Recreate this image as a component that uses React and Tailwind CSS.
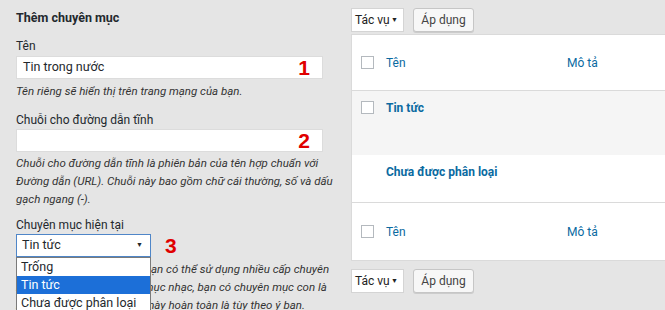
import React from 'react';

const font = { fontFamily: 'Roboto, "Noto Sans", sans-serif' };

function Checkbox() {
  return <span className="inline-block w-[13px] h-[13px] border border-[#b4b9be] bg-white shrink-0" />;
}

function BulkActions() {
  return (
    <div className="flex items-center gap-[9px] h-[24px]">
      <div className="h-full w-[53px] bg-white border border-[#d4d4d4] flex items-center justify-between pl-[3px] pr-[5px] text-[12px] text-[#222] whitespace-nowrap">
        <span>Tác vụ</span>
        <span className="text-[7px]">▼</span>
      </div>
      <button className="h-full w-[61px] bg-[#f7f7f7] border border-[#c6c6c6] rounded-[3px] shadow-[0_1px_0_#ccc] text-[12px] text-[#444] whitespace-nowrap">
        Áp dụng
      </button>
    </div>
  );
}

function Marker({ children }) {
  return (
    <span className="text-[#e00000] font-bold text-[21px] leading-none" style={{ fontFamily: '"Liberation Sans", Arial, sans-serif' }}>
      {children}
    </span>
  );
}

export default function App() {
  return (
    <div className="w-[665px] h-[310px] overflow-hidden bg-[#e5e5e5] flex text-[#23282d]" style={font}>
      {/* left: add category form */}
      <div className="w-[307px] ml-[16px] shrink-0 pt-[9px]">
        <h2 className="text-[12.5px] font-bold leading-[18px]">Thêm chuyên mục</h2>

        <label className="block mt-[10px] text-[12px] leading-[18px]">Tên</label>
        <div className="mt-[1px] h-[23px] bg-white border border-[#dcdcdc] flex items-center justify-between pl-[6px] pr-[12px]">
          <span className="text-[12.5px]">Tin trong nước</span>
          <Marker>1</Marker>
        </div>
        <p className="mt-[3px] text-[11.5px] italic leading-[18px] text-[#333]">Tên riêng sẽ hiển thị trên trang mạng của bạn.</p>

        <label className="block mt-[11px] text-[12px] leading-[18px]">Chuỗi cho đường dẫn tĩnh</label>
        <div className="h-[23px] bg-white border border-[#dcdcdc] flex items-center justify-end pr-[12px]">
          <Marker>2</Marker>
        </div>
        <p className="mt-[2px] text-[11.5px] italic leading-[18px] text-[#333] whitespace-nowrap">
          Chuỗi cho đường dẫn tĩnh là phiên bản của tên hợp chuẩn với<br />
          Đường dẫn (URL). Chuỗi này bao gồm chữ cái thường, số và dấu<br />
          gạch ngang (-).
        </p>

        <label className="block mt-[8px] text-[12px] leading-[18px]">Chuyên mục hiện tại</label>
        <div className="relative">
          <div className="flex items-center gap-[14px]">
            <div className="w-[135px] h-[23px] bg-white border border-[#4f86c8] flex items-center justify-between pl-[5px] pr-[7px]">
              <span className="text-[12.5px]">Tin tức</span>
              <span className="text-[7px]">▼</span>
            </div>
            <Marker>3</Marker>
          </div>
          <p className="mt-[3px] text-[11.5px] italic leading-[18px] text-[#333] whitespace-nowrap">
            Chuyên mục khác với thẻ, bạn có thể sử dụng nhiều cấp chuyên<br />
            mục. Ví dụ: Trong chuyên mục nhạc, bạn có chuyên mục con là<br />
            nhạc Pop, nhạc Jazz. Việc này hoàn toàn là tùy theo ý bạn.
          </p>
          {/* open dropdown list */}
          <div className="absolute left-0 top-[23px] w-[135px] bg-white border border-[#7a7a7a] text-[12.5px] leading-[18px] whitespace-nowrap">
            <div className="px-[4px]">Trống</div>
            <div className="px-[4px] bg-[#1c6fd8] text-white">Tin tức</div>
            <div className="px-[4px]">Chưa được phân loại</div>
          </div>
        </div>
      </div>

      {/* right: category list */}
      <div className="flex-1 ml-[28px] pt-[8px] min-w-0">
        <BulkActions />
        <div className="mt-[2px] bg-white border-l border-y border-[#dadada] text-[12px]">
          <div className="h-[56px] flex items-center border-b border-[#dadada] pl-[9px]">
            <Checkbox />
            <span className="ml-[12px] w-[181px] text-[#0a6aa1]">Tên</span>
            <span className="text-[#0a6aa1]">Mô tả</span>
          </div>
          <div className="h-[64px] bg-[#f5f5f5] flex items-start pl-[9px] pt-[10px]">
            <Checkbox />
            <span className="ml-[12px] font-bold text-[#0a6aa1] leading-[14px]">Tin tức</span>
          </div>
          <div className="h-[48px] pl-[34px] pt-[8px] border-b border-[#dadada]">
            <span className="font-bold text-[#0a6aa1] leading-[18px]">Chưa được phân loại</span>
          </div>
          <div className="h-[57px] flex items-center pl-[9px]">
            <Checkbox />
            <span className="ml-[12px] w-[181px] text-[#0a6aa1]">Tên</span>
            <span className="text-[#0a6aa1]">Mô tả</span>
          </div>
        </div>
        <div className="mt-[8px]">
          <BulkActions />
        </div>
      </div>
    </div>
  );
}
